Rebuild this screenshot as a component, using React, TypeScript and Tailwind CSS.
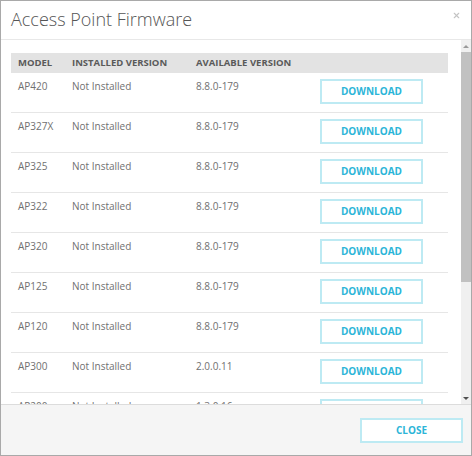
import { X } from 'lucide-react';

const rows = [
  { model: 'AP420', installed: 'Not Installed', available: '8.8.0-179' },
  { model: 'AP327X', installed: 'Not Installed', available: '8.8.0-179' },
  { model: 'AP325', installed: 'Not Installed', available: '8.8.0-179' },
  { model: 'AP322', installed: 'Not Installed', available: '8.8.0-179' },
  { model: 'AP320', installed: 'Not Installed', available: '8.8.0-179' },
  { model: 'AP125', installed: 'Not Installed', available: '8.8.0-179' },
  { model: 'AP120', installed: 'Not Installed', available: '8.8.0-179' },
  { model: 'AP300', installed: 'Not Installed', available: '2.0.0.11' },
  { model: 'AP200', installed: 'Not Installed', available: '1.3.0.16' },
];

export default function App() {
  return (
    <div className="flex h-[456px] w-[472px] flex-col border border-[#a9a9a9] bg-white font-['Open_Sans',sans-serif]">
      <div className="flex h-[39px] shrink-0 items-start justify-between border-b border-[#e8e8e8] pl-[10px] pr-[10px]">
        <h1 className="mt-[6px] text-[18px] font-light leading-[24px] text-[#555]">Access Point Firmware</h1>
        <button type="button" aria-label="Close" className="mt-[10px] text-[#c4c4c4]">
          <X className="h-[9px] w-[9px]" strokeWidth={3} />
        </button>
      </div>

      <div className="flex min-h-0 flex-1">
        <div className="min-w-0 flex-1 overflow-hidden pl-[10px] pr-[13px] pt-[13px]">
          <div className="grid h-[20px] grid-cols-[54px_124px_124px_1fr] items-center bg-[#e3e3e3] text-[9.5px] font-bold uppercase text-[#5a5a5a]">
            <span className="pl-[7px]">Model</span>
            <span className="pl-[7px]">Installed Version</span>
            <span className="pl-[7px]">Available Version</span>
            <span />
          </div>
          {rows.map((r) => (
            <div
              key={r.model}
              className="grid h-[40px] grid-cols-[54px_124px_124px_1fr] border-b border-[#e6e6e6] text-[10px] text-[#707070]"
            >
              <span className="pl-[7px] pt-[6px]">{r.model}</span>
              <span className="pl-[7px] pt-[6px]">{r.installed}</span>
              <span className="pl-[7px] pt-[6px]">{r.available}</span>
              <div className="pl-[7px] pt-[6px]">
                <button
                  type="button"
                  className="h-[25px] w-[103px] border-2 border-[#bdeaf3] bg-white text-[10px] font-bold text-[#2cb5d8]"
                >
                  DOWNLOAD
                </button>
              </div>
            </div>
          ))}
        </div>

        <div className="flex w-[10px] shrink-0 flex-col bg-[#f0f0f0]">
          <div className="flex h-[12px] items-center justify-center">
            <span className="h-0 w-0 border-x-[3px] border-b-[3px] border-x-transparent border-b-[#9a9a9a]" />
          </div>
          <div className="h-[230px] bg-[#c1c1c1]" />
          <div className="flex-1" />
          <div className="flex h-[12px] items-center justify-center">
            <span className="h-0 w-0 border-x-[3px] border-t-[3px] border-x-transparent border-t-[#505050]" />
          </div>
        </div>
      </div>

      <div className="flex h-[51px] shrink-0 items-center justify-end border-t border-[#dcdcdc] bg-[#f5f5f5] pr-[8px]">
        <button
          type="button"
          className="h-[25px] w-[103px] border-2 border-[#bdeaf3] bg-white text-[10px] font-bold text-[#2cb5d8]"
        >
          CLOSE
        </button>
      </div>
    </div>
  );
}
